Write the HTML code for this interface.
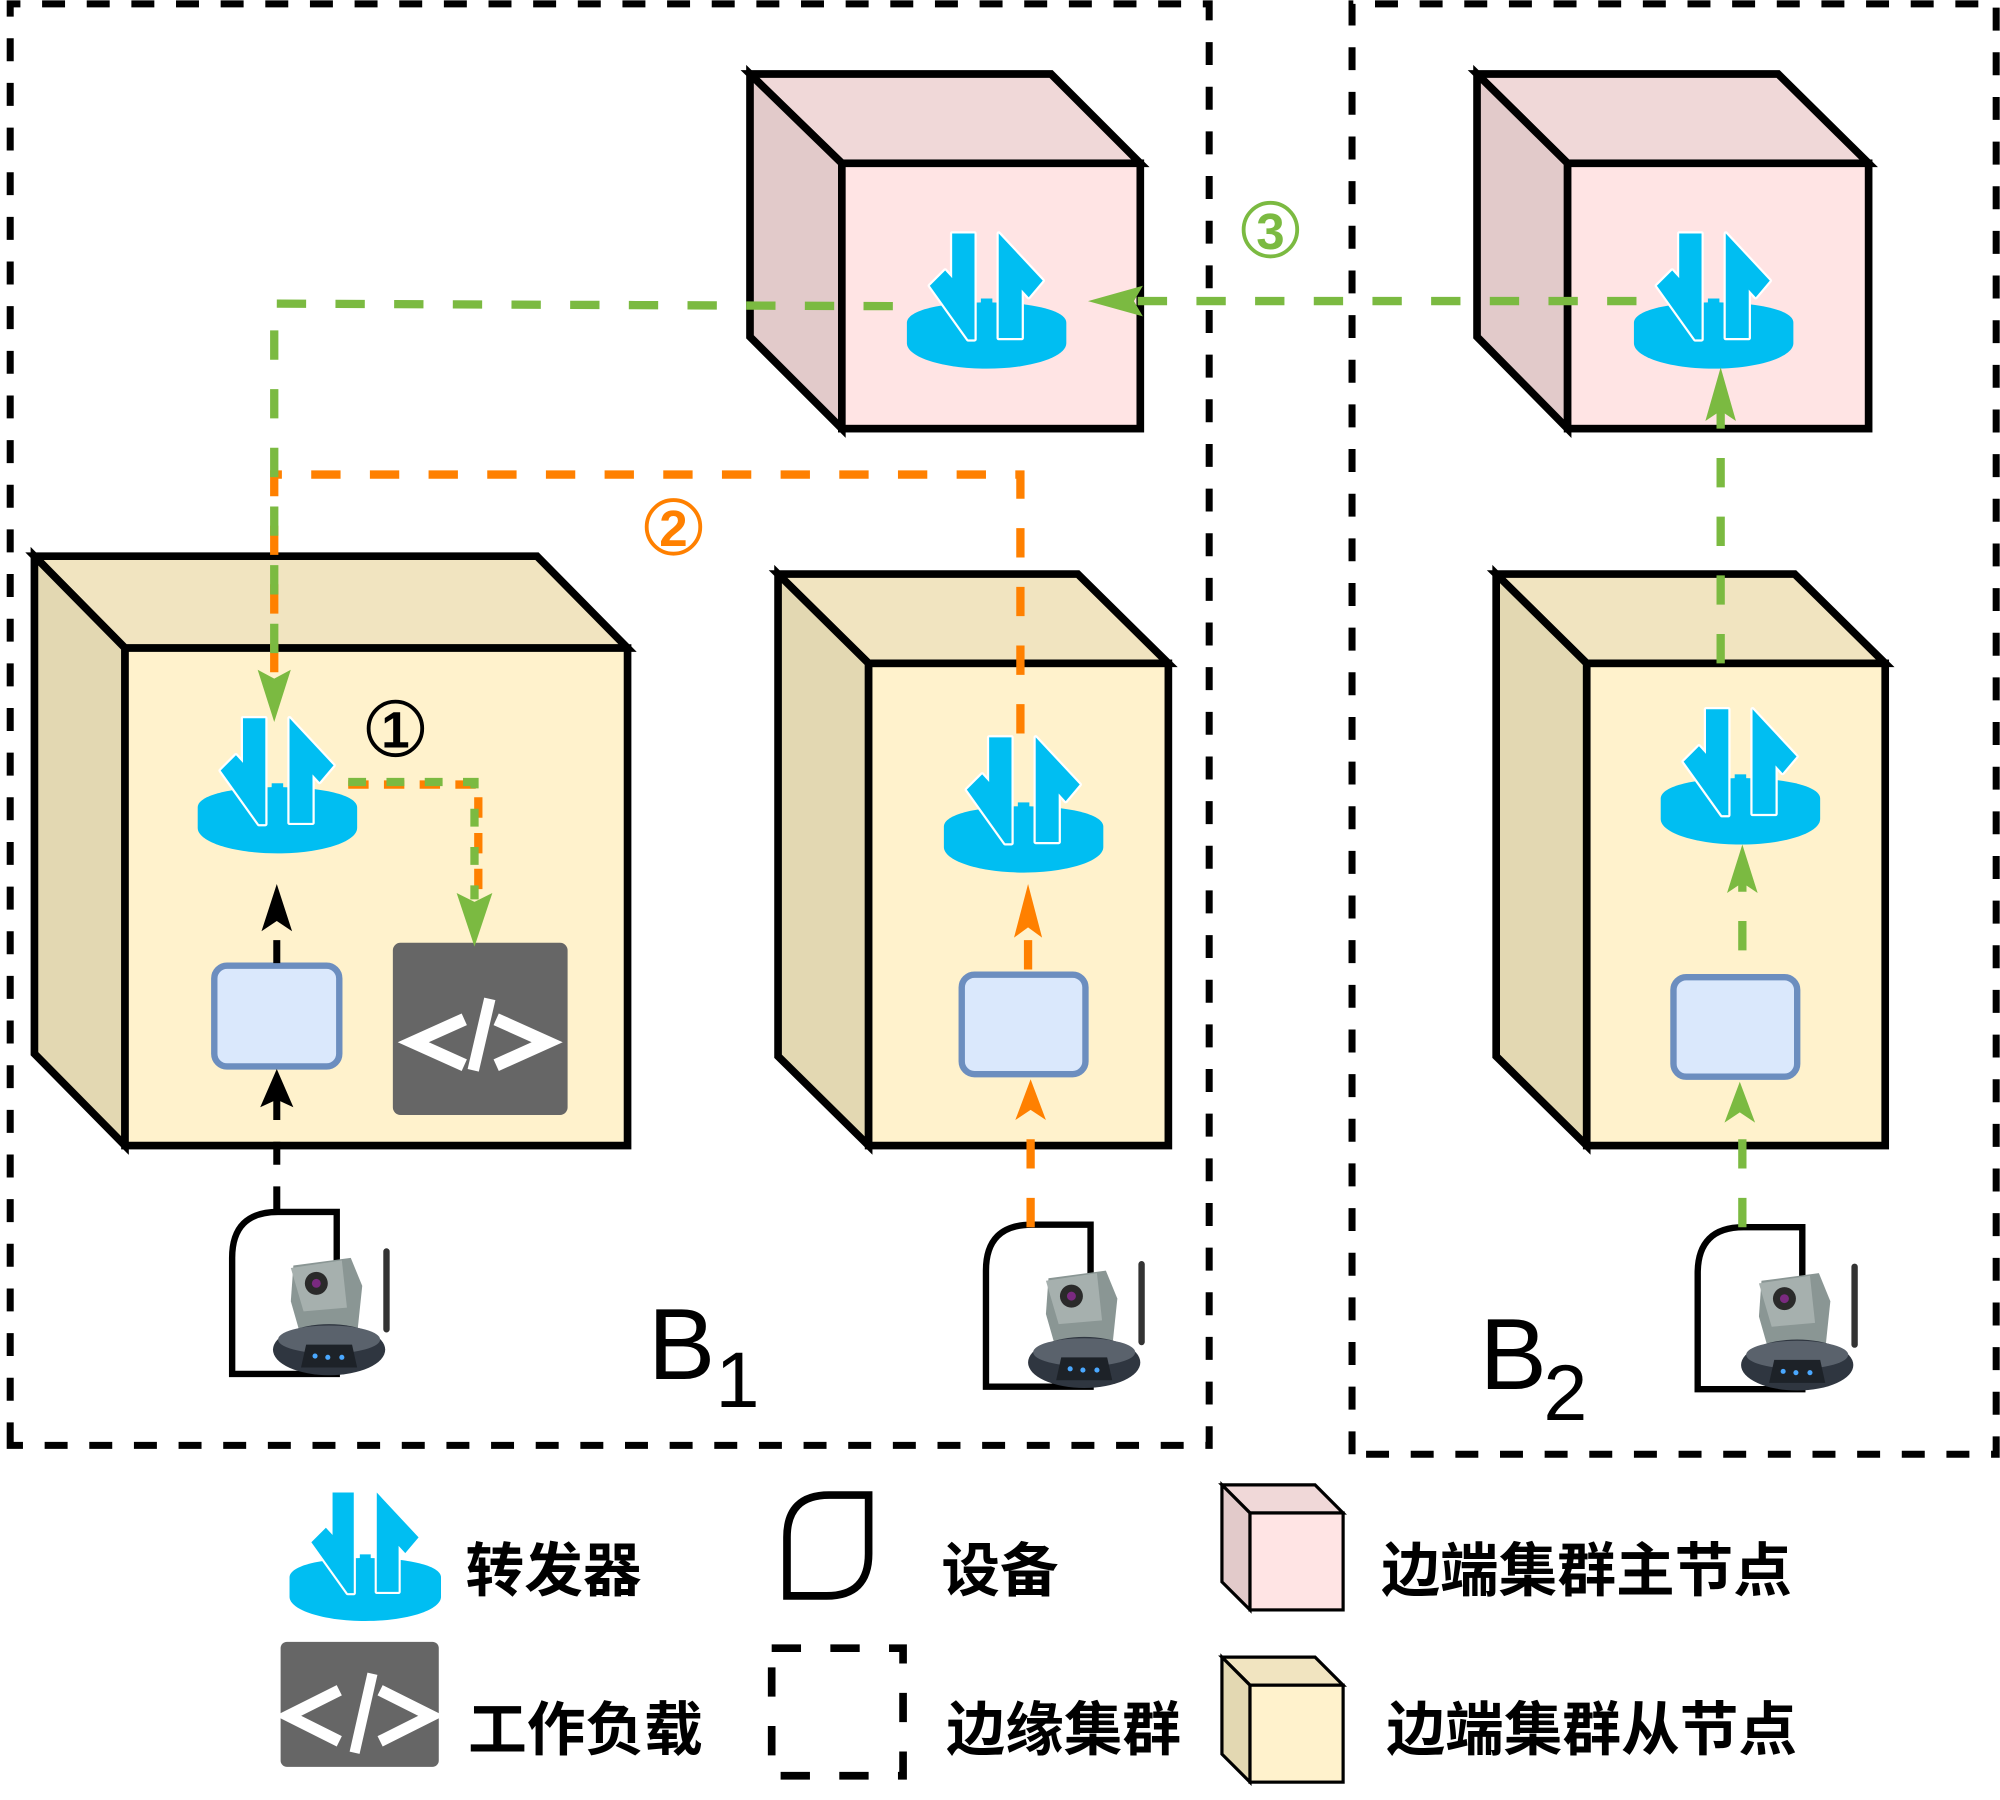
<!DOCTYPE html>
<html><head><meta charset="utf-8"><style>
html,body{margin:0;padding:0;background:#fff}
svg{display:block}
.t{font-family:"Liberation Sans","Noto Sans CJK SC",sans-serif}
.cn{font-family:"Noto Sans CJK SC","WenQuanYi Zen Hei",sans-serif;font-weight:bold;font-size:46px}
</style></head><body>
<svg width="2000" height="1800" viewBox="0 0 1568 1411" preserveAspectRatio="none" xmlns="http://www.w3.org/2000/svg">
<defs>
<g id="fw">
 <path d="M0,70 C0,60 28,54 62.5,54 C97,54 125,60 125,70 L125,86 C125,97 97,106 62.5,106 C28,106 0,97 0,86 Z" fill="#00BEF2"/>
 <polygon points="35.5,0 53,0 53,83 48,83 18,41 30,29 35.5,35" fill="#00BEF2" stroke="#fff" stroke-width="3.5" paint-order="stroke" stroke-linejoin="round"/>
 <rect x="58" y="51" width="9" height="30" fill="#00BEF2"/>
 <polygon points="72,0 106.5,37 95.5,50 90,44 90,82 72,82" fill="#00BEF2" stroke="#fff" stroke-width="3.5" paint-order="stroke" stroke-linejoin="round"/>
</g>
<g id="cam">
 <line x1="123" y1="31" x2="123" y2="92" stroke="#333" stroke-width="5" stroke-linecap="round"/>
 <path d="M50,42 L95,36 L104,58 L100,96 L56,98 L48,70 Z" fill="#8a9694"/>
 <path d="M48,44 L88,38 L92,75 L58,78 Z" fill="#a6b0ae"/>
 <circle cx="68" cy="56" r="9" fill="#2a2a2a"/><circle cx="68" cy="56" r="3.5" fill="#7a2a80"/>
 <ellipse cx="78" cy="108" rx="44" ry="20" fill="#2f3640"/>
 <ellipse cx="78" cy="100" rx="40" ry="11" fill="#5a626c"/>
 <path d="M60,104 L96,104 L100,122 L56,122 Z" fill="#1d2228"/>
 <circle cx="67" cy="113" r="2" fill="#4aa8ff"/><circle cx="77" cy="114" r="2" fill="#4aa8ff"/><circle cx="88" cy="114" r="2" fill="#4aa8ff"/>
</g>
<g id="dev"><path d="M0,127 L0,36 Q0,0 36,0 L82,0 L82,127 Z" fill="none" stroke="#000" stroke-width="5"/></g>
<g id="code">
 <rect width="137" height="135" rx="6" fill="#666"/>
 <path d="M56,60 L16,78 L56,96 M81,60 L121,78 L81,96" fill="none" stroke="#fff" stroke-width="10"/>
 <path d="M76,44 L63,100" fill="none" stroke="#fff" stroke-width="9"/>
</g>
</defs>

<g fill="none" stroke="#000" stroke-width="5.5" stroke-dasharray="18 17">
 <path d="M8,1133 L8,3 L948,3 L948,1133 Z"/>
 <path d="M1060,1140 L1060,3 L1565,3 L1565,1140 Z"/>
</g>

<g stroke="#000" stroke-width="6" stroke-linejoin="miter">
 <polygon points="588,58 824,58 894,128 660,128" fill="#F0D8D8"/>
 <polygon points="588,58 660,128 660,336 588,264" fill="#E2CACA"/>
 <rect x="660" y="128" width="234" height="208" fill="#FFE4E4"/>
 <polygon points="1158,58 1394,58 1465,128 1229,128" fill="#F0D8D8"/>
 <polygon points="1158,58 1229,128 1229,336 1158,264" fill="#E2CACA"/>
 <rect x="1229" y="128" width="236" height="208" fill="#FFE4E4"/>
 <polygon points="27,436 421,436 492,508 98,508" fill="#F1E4C0"/>
 <polygon points="27,436 98,508 98,898 27,826" fill="#E3D8B2"/>
 <rect x="98" y="508" width="394" height="390" fill="#FFF2CC"/>
 <polygon points="610,450 845,450 916,520 681,520" fill="#F1E4C0"/>
 <polygon points="610,450 681,520 681,898 610,828" fill="#E3D8B2"/>
 <rect x="681" y="520" width="235" height="378" fill="#FFF2CC"/>
 <polygon points="1173,450 1407,450 1478,520 1244,520" fill="#F1E4C0"/>
 <polygon points="1173,450 1244,520 1244,898 1173,828" fill="#E3D8B2"/>
 <rect x="1244" y="520" width="234" height="378" fill="#FFF2CC"/>
</g>

<g fill="#DAE8FC" stroke="#6C8EBF" stroke-width="5">
 <rect x="168" y="757" width="98" height="79" rx="10"/>
 <rect x="754" y="764" width="97" height="78" rx="10"/>
 <rect x="1312" y="766" width="97" height="78" rx="10"/>
</g>
<use href="#code" x="308" y="739"/>

<use href="#dev" x="182" y="950"/><use href="#cam" x="180" y="950"/>
<use href="#dev" x="773" y="960"/><use href="#cam" x="772" y="960"/>
<use href="#dev" x="1331" y="962"/><use href="#cam" x="1331" y="962"/>

<use href="#fw" x="711" y="183"/>
<use href="#fw" x="1281" y="183"/>
<use href="#fw" x="155" y="563"/>
<use href="#fw" x="740" y="578"/>
<use href="#fw" x="1302" y="556"/>

<g fill="none" stroke-width="6.5" stroke-dasharray="23 23">
 <path d="M800,575 L800,372 L215,372 L215,545" stroke="#FF8000"/>
 <path d="M700,240 L215,238 L215,545" stroke="#7BBA41"/>
 <path d="M1283,236 L870,236" stroke="#7BBA41"/>
 <path d="M1349,520 L1349,305" stroke="#7BBA41"/>
 <path d="M1366,962 L1366,870" stroke="#7BBA41"/>
 <path d="M1366,745 L1366,690" stroke="#7BBA41"/>
 <path d="M808,962 L808,870" stroke="#FF8000"/>
 <path d="M806,760 L806,715" stroke="#FF8000"/>
 <path d="M273,615 L375,615 L375,705" stroke="#FF8000" stroke-dasharray="16 12"/>
 <path d="M273,613 L372,613 L372,705" stroke="#7BBA41" stroke-dasharray="14 16"/>
 <path d="M217,948 L217,860" stroke="#000" stroke-width="5.5" stroke-dasharray="18 17"/>
 <path d="M217,755 L217,715" stroke="#000" stroke-width="5.5" stroke-dasharray="18 17"/>
</g>
<g fill="#7BBA41">
 <polygon points="215,566 202,525 215,532 228,525"/>
 <polygon points="372,742 358,700 372,707 386,700"/>
 <polygon points="853,236 896,224 889,236 896,248"/>
 <polygon points="1349,288 1337,330 1349,322 1361,330"/>
 <polygon points="1366,662 1354,700 1366,692 1378,700"/>
 <polygon points="1364,848 1352,880 1364,872 1376,880"/>
</g>
<g fill="#FF8000">
 <polygon points="806,693 795,735 806,727 817,735"/>
 <polygon points="808,846 796,878 808,870 820,878"/>
</g>
<g fill="#000">
 <polygon points="217,693 205,730 217,722 229,730"/>
 <polygon points="217,838 204,868 217,862 230,868"/>
</g>

<g class="t">
 <circle cx="310" cy="571" r="21" fill="none" stroke="#000" stroke-width="3"/>
 <text x="310" y="586" font-size="40" font-weight="bold" text-anchor="middle">1</text>
 <circle cx="528" cy="413" r="21" fill="none" stroke="#FF8000" stroke-width="3"/>
 <text x="528" y="428" font-size="40" font-weight="bold" text-anchor="middle" fill="#FF8000">2</text>
 <circle cx="996" cy="180" r="21" fill="none" stroke="#7BBA41" stroke-width="3"/>
 <text x="996" y="195" font-size="40" font-weight="bold" text-anchor="middle" fill="#7BBA41">3</text>
 <text x="508" y="1081" font-size="79">B</text>
 <text x="561" y="1103" font-size="62">1</text>
 <text x="1160" y="1089" font-size="79">B</text>
 <text x="1210" y="1113" font-size="62">2</text>
</g>

<g transform="translate(227,1170) scale(0.95)"><use href="#fw"/></g>
<text class="cn" x="365" y="1247">转发器</text>
<path d="M617,1251 L617,1205 Q617,1172 650,1172 L681,1172 L681,1218 Q681,1251 648,1251 Z" fill="none" stroke="#000" stroke-width="6"/>
<text class="cn" x="738" y="1247">设备</text>
<g stroke="#000" stroke-width="2.5">
 <polygon points="958,1164 1031,1164 1053,1186 980,1186" fill="#F0D8D8"/>
 <polygon points="958,1164 980,1186 980,1262 958,1240" fill="#E2CACA"/>
 <rect x="980" y="1186" width="73" height="76" fill="#FFE4E4"/>
 <polygon points="958,1299 1031,1299 1053,1321 980,1321" fill="#F1E4C0"/>
 <polygon points="958,1299 980,1321 980,1397 958,1375" fill="#E3D8B2"/>
 <rect x="980" y="1321" width="73" height="76" fill="#FFF2CC"/>
</g>
<text class="cn" x="1083" y="1247">边端集群主节点</text>
<rect x="220" y="1287" width="124" height="98" rx="5" fill="#666"/>
<path d="M266,1325 L226,1345 L266,1365 M298,1325 L338,1345 L298,1365" fill="none" stroke="#fff" stroke-width="9"/>
<path d="M292,1312 L278,1374" fill="none" stroke="#fff" stroke-width="8"/>
<text class="cn" x="367" y="1372">工作负载</text>
<rect x="605" y="1292" width="103" height="100" fill="none" stroke="#000" stroke-width="6" stroke-dasharray="23 23"/>
<text class="cn" x="742" y="1372">边缘集群</text>
<text class="cn" x="1087" y="1372">边端集群从节点</text>
</svg>
</body></html>
